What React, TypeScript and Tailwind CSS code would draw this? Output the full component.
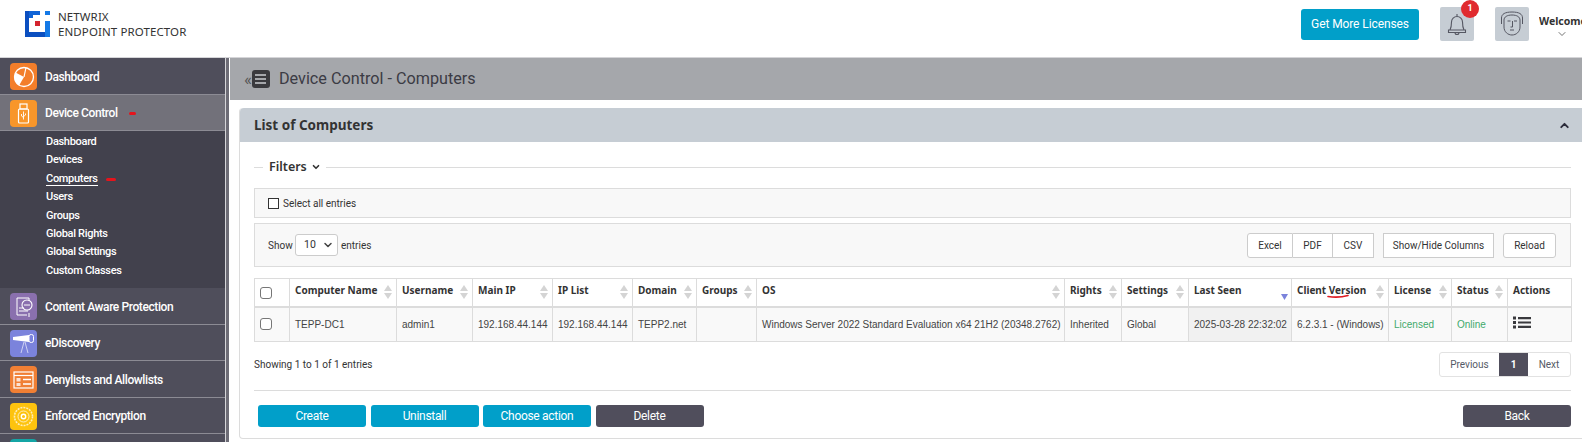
import { ChevronDown, ChevronUp } from 'lucide-react';

const UI_FONT = 'font-["Roboto",sans-serif]';
const BOLD_FONT = 'font-["Noto_Sans",sans-serif]';
const CELL_FONT = 'font-["Liberation_Sans",sans-serif]';

const SUB_ITEMS = ['Dashboard', 'Devices', 'Computers', 'Users', 'Groups', 'Global Rights', 'Global Settings', 'Custom Classes'];

const COLUMNS = [
  { label: '', width: 35 },
  { label: 'Computer Name', width: 107, sort: true },
  { label: 'Username', width: 76, sort: true },
  { label: 'Main IP', width: 80, sort: true },
  { label: 'IP List', width: 80, sort: true },
  { label: 'Domain', width: 64, sort: true },
  { label: 'Groups', width: 60, sort: true },
  { label: 'OS', width: 308, sort: true },
  { label: 'Rights', width: 57, sort: true },
  { label: 'Settings', width: 67, sort: true },
  { label: 'Last Seen', width: 103 },
  { label: 'Client Version', width: 97, sort: true },
  { label: 'License', width: 63, sort: true },
  { label: 'Status', width: 56, sort: true },
  { label: 'Actions', width: 64 },
];

function Logo() {
  return (
    <svg width="26" height="27" viewBox="0 0 26 27" className="shrink-0">
      <path d="M0 0h4v21H0z" fill="#0b4fc0" />
      <path d="M4 0h11v4H8v3H4z" fill="#0f63d6" />
      <rect x="20" y="0" width="5" height="4" fill="#1479e6" />
      <rect x="10" y="10" width="5" height="5" fill="#d4242e" />
      <path d="M20 10h5v16h-5z" fill="#1479e6" />
      <path d="M0 21h20v5H0z" fill="#0b4fc0" />
    </svg>
  );
}

function DashIcon() {
  return (
    <svg width="27" height="27" viewBox="0 0 27 27">
      <rect width="27" height="27" rx="4" fill="#f37e2a" />
      <circle cx="14" cy="14" r="9.5" fill="none" stroke="#fff" strokeWidth="1.3" />
      <path d="M14 14 5.500 9.500A9.500 9.500 0 0 0 9 22.500L14 14z" fill="#fff" />
      <path d="M14 14 16 4.500" stroke="#fff" strokeWidth="1.2" />
    </svg>
  );
}

function UsbIcon() {
  return (
    <svg width="27" height="27" viewBox="0 0 27 27">
      <rect width="27" height="27" rx="4" fill="#f8962a" />
      <rect x="10" y="4" width="7" height="5" fill="none" stroke="#fff" strokeWidth="1.2" />
      <rect x="8.500" y="9" width="10" height="14" rx="1" fill="none" stroke="#fff" strokeWidth="1.2" />
      <path d="M13.500 11.500v8M11.500 14v2l2 1.500M15.500 13.500v1.500l-2 1.500" fill="none" stroke="#fff" strokeWidth="0.9" />
    </svg>
  );
}

function ContentIcon() {
  return (
    <svg width="27" height="27" viewBox="0 0 27 27">
      <rect width="27" height="27" rx="4" fill="#8a70ae" />
      <path d="M7 5h12v3M7 5v17h10M19 20v4" fill="none" stroke="#fff" strokeWidth="1" />
      <circle cx="17" cy="12" r="5" fill="none" stroke="#fff" strokeWidth="1.1" />
      <path d="M14 12h6M9 15h5M9 18h9" stroke="#fff" strokeWidth="1" />
    </svg>
  );
}

function ScopeIcon() {
  return (
    <svg width="27" height="27" viewBox="0 0 27 27">
      <rect width="27" height="27" rx="4" fill="#7b83dc" />
      <path d="M3 7l16-2v7L3 10z" fill="#fff" />
      <rect x="19" y="4.500" width="4.500" height="8" rx="2" fill="none" stroke="#fff" strokeWidth="1" />
      <path d="M14 12l-3 11M15 12l3 11" stroke="#fff" strokeWidth="0.8" opacity="0.8" />
    </svg>
  );
}

function ListIcon() {
  return (
    <svg width="27" height="27" viewBox="0 0 27 27">
      <rect width="27" height="27" rx="4" fill="#f07f34" />
      <rect x="4" y="6" width="19" height="16" fill="none" stroke="#fff" strokeWidth="1.2" />
      <path d="M4 9.500h19" stroke="#fff" strokeWidth="1.2" />
      <rect x="6.500" y="12" width="4" height="3.500" fill="#fde3d2" />
      <rect x="6.500" y="17" width="4" height="3" fill="#fde3d2" />
      <path d="M13 13.500h8M13 18h8" stroke="#fff" strokeWidth="1.6" />
    </svg>
  );
}

function DiscIcon() {
  return (
    <svg width="27" height="27" viewBox="0 0 27 27">
      <rect width="27" height="27" rx="4" fill="#fdc30e" />
      <circle cx="13.500" cy="13.500" r="9" fill="none" stroke="#fff" strokeWidth="1.6" strokeDasharray="2 1" opacity="0.7" />
      <circle cx="13.500" cy="13.500" r="5.500" fill="none" stroke="#fff" strokeWidth="1" opacity="0.7" />
      <circle cx="13.500" cy="13.500" r="2.200" fill="none" stroke="#fff" strokeWidth="1.4" />
    </svg>
  );
}

function NavRow({ icon, label, active }: { icon: React.ReactNode; label: string; active?: boolean }) {
  return (
    <div
      className={`flex h-[36.500px] shrink-0 items-center gap-[8px] pl-[10px] pt-[2px] text-[12px] font-medium tracking-[-0.4px] text-white border-b border-[#8c8b94] ${
        active ? 'bg-[#72717a]' : 'bg-[#4f4e5b]'
      }`}
    >
      {icon}
      <span>{label}</span>
    </div>
  );
}

function SortIcon({ active }: { active?: boolean }) {
  if (active) {
    return (
      <svg width="7" height="6" viewBox="0 0 7 6" className="absolute bottom-[6px] right-[3px]">
        <path d="M0 0h7L3.500 6z" fill="#7b83dc" />
      </svg>
    );
  }
  return (
    <svg width="8" height="14" viewBox="0 0 8 14" className="mt-[2px] shrink-0">
      <path d="M4 0l4 6H0z" fill="#d4d4d4" />
      <path d="M4 14l4-6H0z" fill="#d4d4d4" />
    </svg>
  );
}

function Checkbox() {
  return <span className="block h-[12px] w-[12px] rounded-[3px] border border-[#767676] bg-white" />;
}

function ActionButton({ label, dark }: { label: string; dark?: boolean }) {
  return (
    <button className={`block h-[22px] w-[108px] rounded-[3px] text-[12px] tracking-[-0.3px] text-white ${dark ? 'bg-[#504e5c]' : 'bg-[#019fc9]'}`}>
      {label}
    </button>
  );
}

export default function App() {
  return (
    <div className={`flex h-[442px] w-[1582px] flex-col overflow-hidden bg-white text-[#333] ${UI_FONT}`}>
      <header className="flex h-[58px] shrink-0 items-center border-b border-[#d5d5d8] pb-[9px] pl-[25px]">
        <Logo />
        <div className={`ml-[7px] text-[11.500px] leading-[15px] tracking-[0.1px] text-[#333] ${BOLD_FONT}`}>
          <div>NETWRIX</div>
          <div>ENDPOINT PROTECTOR</div>
        </div>
        <button className="ml-auto h-[31px] w-[118px] rounded-[3px] bg-[#019fc9] text-[12px] tracking-[-0.1px] text-white">Get More Licenses</button>
        <div className="relative ml-[21px] flex h-[34px] w-[34px] items-center justify-center rounded-[2px] bg-[#c6cdd4]">
          <svg width="20" height="24" viewBox="0 0 20 24" fill="none" stroke="#555762" strokeWidth="1.1">
            <path d="M3 18c1-2 1.500-4 1.500-8a5.500 5.500 0 0 1 11 0c0 4 .5 6 1.500 8M1.500 18h17v2.500h-17zM10 2V4.500M8 20.500a2 2 0 0 0 4 0" />
          </svg>
          <span className="absolute -right-[5px] -top-[7px] flex h-[18px] w-[18px] items-center justify-center rounded-full bg-[#e02b2f] text-[9px] font-bold text-white">
            1
          </span>
        </div>
        <div className="ml-[21px] flex h-[34px] w-[34px] items-center justify-center rounded-[2px] bg-[#c6cdd4]">
          <svg width="24" height="26" viewBox="0 0 24 26" fill="none" stroke="#555762" strokeWidth="1">
            <path d="M1.500 13V7C1.500 3 5 1 12 1s10.500 2 10.500 6v6" />
            <path d="M4 9c0-3 3-5 8-5s8 2 8 5v7c0 5-4 8-8 8s-8-3-8-8z" />
            <path d="M7.500 10h3M14 10h3M12.500 10v6h-2M10 19h4" />
          </svg>
        </div>
        <div className="ml-[10px] mt-[6px] flex w-[43px] flex-col items-start overflow-hidden">
          <span className={`text-[10.500px] font-bold leading-[14px] text-[#333] ${BOLD_FONT}`}>Welcome</span>
          <ChevronDown className="ml-[17px] h-[12px] w-[12px] text-[#444]" strokeWidth={1.500} />
        </div>
      </header>

      <div className="flex min-h-0 flex-1">
        <aside className="flex w-[225px] shrink-0 flex-col overflow-hidden bg-[#4f4e5b]">
          <NavRow icon={<DashIcon />} label="Dashboard" />
          <div className="relative">
            <NavRow icon={<UsbIcon />} label="Device Control" active />
            <span className="absolute left-[129px] top-[17px] h-[3px] w-[7px] rounded-full bg-[#e5141c]" />
          </div>
          <nav className="flex h-[157px] shrink-0 flex-col bg-[#42414d] pl-[46px] pt-[2px] text-[11px] font-medium tracking-[-0.3px] text-white">
            {SUB_ITEMS.map((item) => (
              <div key={item} className="relative flex h-[18.400px] shrink-0 items-center">
                <span className={item === 'Computers' ? 'border-b border-white leading-[13px]' : ''}>{item}</span>
                {item === 'Computers' && <span className="absolute left-[60px] top-[8px] h-[3px] w-[10px] rounded-full bg-[#e5141c]" />}
              </div>
            ))}
          </nav>
          <NavRow icon={<ContentIcon />} label="Content Aware Protection" />
          <NavRow icon={<ScopeIcon />} label="eDiscovery" />
          <NavRow icon={<ListIcon />} label="Denylists and Allowlists" />
          <NavRow icon={<DiscIcon />} label="Enforced Encryption" />
          <div className="ml-[10px] mt-[5px] h-[27px] w-[27px] shrink-0 rounded-[4px] bg-[#14a5a5]" />
        </aside>
        <div className="w-[1px] shrink-0 bg-[#d5d5d8]" />
        <div className="w-[3px] shrink-0 bg-[#6d6c76]" />
        <div className="w-[1px] shrink-0 bg-white" />

        <main className="flex min-w-0 flex-1 flex-col">
          <div className="flex h-[42px] shrink-0 items-center bg-[#a5a7ab] pl-[14px] text-[#3b3b44]">
            <span className="text-[17px] leading-none text-[#555]">«</span>
            <span className="flex h-[18px] w-[18px] flex-col items-center justify-center gap-[2px] rounded-[3px] bg-[#3a3a3e]">
              <span className="h-[2px] w-[11px] bg-[#a5a7ab]" />
              <span className="h-[2px] w-[11px] bg-[#a5a7ab]" />
              <span className="h-[2px] w-[11px] bg-[#a5a7ab]" />
            </span>
            <span className="ml-[9px] text-[16.200px]">Device Control - Computers</span>
          </div>

          <section className="ml-[9px] mr-[-8px] mt-[8px] flex h-[331px] flex-col rounded-[4px] border border-t-0 border-[#dcdcdc]">
            <div className="flex h-[34px] shrink-0 items-center justify-between rounded-t-[4px] bg-[#c6cdd4] pl-[14px] pr-[18px]">
              <span className={`text-[13.500px] font-bold text-[#333] ${BOLD_FONT}`}>List of Computers</span>
              <ChevronUp className="h-[13px] w-[13px] text-[#2b2b3a]" strokeWidth={3.500} />
            </div>

            <div className="w-[1331px] pl-[14px]">
              <div className="mt-[18px] flex h-[14px] items-center">
                <span className="h-[1px] w-[9px] bg-[#dcdcdc]" />
                <span className={`mx-[5px] flex items-center gap-[4px] pl-[1px] text-[12.500px] font-semibold text-[#333] ${BOLD_FONT}`}>
                  Filters <ChevronDown className="h-[10px] w-[10px]" strokeWidth={4} />
                </span>
                <span className="h-[1px] flex-1 bg-[#dcdcdc]" />
              </div>

              <div className="mt-[14px] flex h-[30px] items-center gap-[3px] border border-[#dcdcdc] bg-[#f8f8f8] pl-[13px] text-[10px]">
                <span className="h-[11px] w-[11px] border border-[#333] bg-white" />
                <span className="ml-[1px]">Select all entries</span>
              </div>

              <div className="mt-[5px] flex h-[44px] items-center border border-[#dcdcdc] bg-[#f8f8f8] pl-[13px] pr-[14px] text-[10px]">
                <span className="w-[24px]">Show</span>
                <span className="mx-[3px] flex h-[22px] w-[43px] items-center justify-between rounded-[3px] border border-[#ccc] bg-white pl-[8px] pr-[3px] text-[10.500px]">
                  10
                  <ChevronDown className="h-[12px] w-[12px] text-[#444]" strokeWidth={3} />
                </span>
                <span>entries</span>
                <div className="ml-auto flex h-[25px] items-stretch">
                  <span className="flex w-[46px] items-center justify-center rounded-l-[3px] border border-[#ccc] bg-white">Excel</span>
                  <span className="flex w-[40px] items-center justify-center border border-l-0 border-[#ccc] bg-white">PDF</span>
                  <span className="flex w-[41px] items-center justify-center border border-l-0 border-[#ccc] bg-white">CSV</span>
                  <span className="ml-[9px] flex w-[111px] items-center justify-center border border-[#ccc] bg-white">Show/Hide Columns</span>
                  <span className="ml-[9px] flex w-[53px] items-center justify-center rounded-[3px] border border-[#ccc] bg-white">Reload</span>
                </div>
              </div>

              <table className="mt-[11px] w-[1317px] table-fixed border-collapse">
                <colgroup>
                  {COLUMNS.map((col, i) => (
                    <col key={i} style={{ width: col.width }} />
                  ))}
                </colgroup>
                <thead>
                  <tr className="h-[28px] bg-white">
                    {COLUMNS.map((col, i) => (
                      <th key={i} className={`relative border border-b-2 border-[#dcdcdc] pl-[5px] pr-[4px] pt-[4px] text-left align-top text-[10px] font-bold ${BOLD_FONT}`}>
                        {i === 0 ? (
                          <span className="mt-[4px] block"><Checkbox /></span>
                        ) : (
                          <div className="flex items-start justify-between whitespace-nowrap">
                            <span>{col.label}</span>
                            {col.sort && <SortIcon />}
                            {col.label === 'Last Seen' && <SortIcon active />}
                          </div>
                        )}
                        {col.label === 'Client Version' && (
                          <svg width="22" height="4" viewBox="0 0 22 4" className="absolute left-[35px] top-[15px]">
                            <path d="M1 2.500c6 1 13 1 20-1" fill="none" stroke="#e01b22" strokeWidth="1.600" strokeLinecap="round" />
                          </svg>
                        )}
                      </th>
                    ))}
                  </tr>
                </thead>
                <tbody>
                  <tr className={`h-[35px] bg-[#f9f9f9] text-[10px] text-[#444] ${CELL_FONT}`}>
                    <td className="border border-[#dcdcdc] pl-[5px]"><Checkbox /></td>
                    <td className="border border-[#dcdcdc] pl-[5px]">TEPP-DC1</td>
                    <td className="border border-[#dcdcdc] pl-[5px]">admin1</td>
                    <td className="border border-[#dcdcdc] pl-[5px]">192.168.44.144</td>
                    <td className="border border-[#dcdcdc] pl-[5px]">192.168.44.144</td>
                    <td className="border border-[#dcdcdc] pl-[5px]">TEPP2.net</td>
                    <td className="border border-[#dcdcdc]" />
                    <td className="whitespace-nowrap border border-[#dcdcdc] pl-[5px]">Windows Server 2022 Standard Evaluation x64 21H2 (20348.2762)</td>
                    <td className="border border-[#dcdcdc] pl-[5px]">Inherited</td>
                    <td className="border border-[#dcdcdc] pl-[5px]">Global</td>
                    <td className="whitespace-nowrap border border-[#dcdcdc] bg-[#f1f1f1] pl-[5px]">2025-03-28 22:32:02</td>
                    <td className="whitespace-nowrap border border-[#dcdcdc] pl-[5px]">6.2.3.1 - (Windows)</td>
                    <td className="border border-[#dcdcdc] pl-[5px] text-[#3fa96b]">Licensed</td>
                    <td className="border border-[#dcdcdc] pl-[5px] text-[#3fa96b]">Online</td>
                    <td className="border border-[#dcdcdc] pl-[5px]">
                      <svg width="18" height="13" viewBox="0 0 18 13" className="mb-[3px]">
                        <path d="M0 .5h3v3H0zM0 5h3v3H0zM0 9.500h3v3H0zM5 1h13v2.200H5zM5 5.400h13v2.200H5zM5 9.800h13v2.200H5z" fill="#3a3a3e" />
                      </svg>
                    </td>
                  </tr>
                </tbody>
              </table>

              <div className="mt-[10px] flex h-[25px] items-center justify-between text-[10px]">
                <span>Showing 1 to 1 of 1 entries</span>
                <div className="flex h-[25px] items-stretch overflow-hidden rounded-[3px] border border-[#e2e2e2] text-[#555a66]">
                  <span className="flex w-[59px] items-center justify-center">Previous</span>
                  <span className="flex w-[29px] items-center justify-center bg-[#504e5c] font-bold text-white">1</span>
                  <span className="flex w-[42px] items-center justify-center">Next</span>
                </div>
              </div>

              <div className="mt-[13px] h-[1px] bg-[#dcdcdc]" />

              <div className="mt-[14px] flex gap-[4.500px] pl-[4px]">
                <ActionButton label="Create" />
                <ActionButton label="Uninstall" />
                <ActionButton label="Choose action" />
                <ActionButton label="Delete" dark />
                <div className="ml-auto">
                  <ActionButton label="Back" dark />
                </div>
              </div>
            </div>
          </section>
        </main>
      </div>
    </div>
  );
}
